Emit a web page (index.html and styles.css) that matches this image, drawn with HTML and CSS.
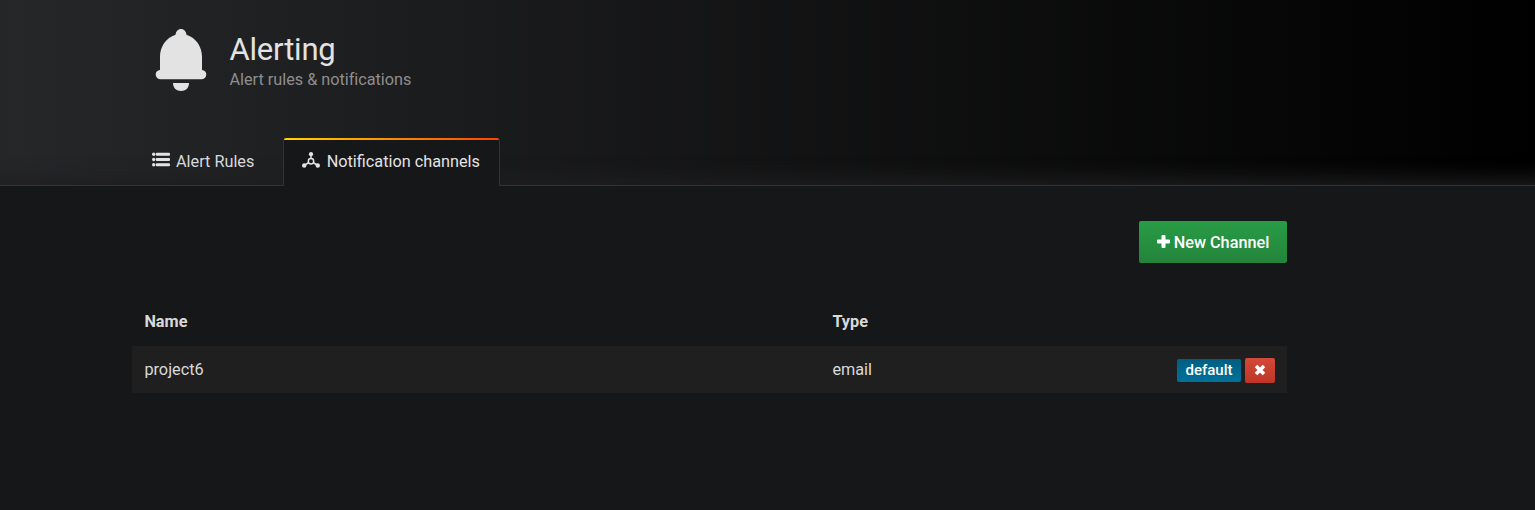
FILE: index.html
```
<!DOCTYPE html>
<html lang="en">
<head>
<meta charset="utf-8">
<title>Alerting</title>
<link rel="stylesheet" href="styles.css">
</head>
<body>
<header class="page-header">
  <div class="container header-inner">
    <div class="page-title">
      <svg class="bell" viewBox="0 0 52 64" width="52" height="64" fill="#e3e3e3">
        <path d="M20.500 6.800C21 3.200 23 1 26 1s5 2.200 5.500 5.800C41 10 47 18.500 47 29v13c2.800.2 4.300 2.100 4.300 4.500 0 2.700-1.800 4.700-4.300 4.700H5C2.500 51.200.7 49.200.7 46.500.7 44.100 2.200 42.200 5 42V29C5 18.500 11 10 20.500 6.800z"/>
        <path d="M18 55h16c0 5-3.400 8-8 8s-8-3-8-8z"/>
      </svg>
      <div class="title-text">
        <h1>Alerting</h1>
        <div class="subtitle">Alert rules &amp; notifications</div>
      </div>
    </div>
    <nav class="tabs">
      <a class="tab">
        <svg class="tab-icon" width="18" height="15" viewBox="0 0 18 15" fill="#e3e3e3">
          <circle cx="1.700" cy="2.200" r="1.700"/><circle cx="1.700" cy="7.500" r="1.700"/><circle cx="1.700" cy="12.800" r="1.700"/>
          <rect x="3.800" y=".7" width="14.200" height="3" rx="1"/><rect x="3.800" y="6" width="14.200" height="3" rx="1"/><rect x="3.800" y="11.300" width="14.200" height="3" rx="1"/>
        </svg>
        <span>Alert Rules</span>
      </a>
      <a class="tab active">
        <svg class="tab-icon" width="18" height="16" viewBox="0 0 18 16" fill="#e3e3e3">
          <path d="M9 2v5M7 10.500l-5 3M11 10.500l5 3" stroke="#e3e3e3" stroke-width="1.500"/>
          <circle cx="9" cy="9.200" r="2.700" fill="none" stroke="#e3e3e3" stroke-width="1.500"/>
          <circle cx="9" cy="2.200" r="2.100"/><circle cx="2.200" cy="13.500" r="2.200"/><circle cx="15.800" cy="13.500" r="2.200"/>
        </svg>
        <span>Notification channels</span>
      </a>
    </nav>
  </div>
</header>
<main class="container page-body">
  <div class="action-bar">
    <button class="btn-new">
      <svg width="13" height="13" viewBox="0 0 13 13" fill="#fff"><path d="M5.500 0h2q1 0 1 1v3.500H12q1 0 1 1v2q0 1-1 1H8.500V12q0 1-1 1h-2q-1 0-1-1V8.500H1q-1 0-1-1v-2q0-1 1-1h3.500V1q0-1 1-1z"/></svg>
      <span>New Channel</span>
    </button>
  </div>
  <table class="channels">
    <thead><tr><th class="col-name">Name</th><th>Type</th><th></th></tr></thead>
    <tbody><tr>
      <td>project6</td><td>email</td>
      <td><div class="row-actions">
        <span class="badge">default</span>
        <button class="btn-delete" aria-label="Delete"><svg width="12" height="12" viewBox="0 0 12 12"><path d="M2 2l8 8M10 2L2 10" stroke="#fff" stroke-width="3.600" stroke-linecap="butt"/></svg></button>
      </div></td>
    </tr></tbody>
  </table>
</main>
</body>
</html>
```
FILE: styles.css
```
* { box-sizing: border-box; }
body {
  margin: 0;
  min-height: 510px;
  background: #161719;
  color: #d8d9da;
  font-family: Roboto, "Liberation Sans", sans-serif;
  font-size: 16.25px;
  line-height: 24px;
}
.container { width: 1155px; margin-left: 132px; }
.page-header {
  height: 186px;
  background: linear-gradient(90deg, #262729, #000);
  box-shadow: inset 0 -22px 20px -16px #1f1f20;
  border-bottom: 1px solid #333;
}
.header-inner {
  height: 186px;
  display: flex;
  flex-direction: column;
  justify-content: space-between;
}
.page-title { display: flex; padding: 28px 0 0 23px; }
.title-text { margin-left: 22.5px; padding-top: 4px; }
h1 {
  margin: 0;
  font-size: 31px;
  font-weight: 400;
  line-height: 36px;
  letter-spacing: -0.2px;
  color: #e3e3e3;
}
.subtitle { color: #8e8e8e; line-height: 24px; letter-spacing: -0.02px; }
.tabs { display: flex; }
.tab {
  display: flex;
  width: 151px;
  height: 48px;
  padding: 12px 0 0 20px;
  white-space: nowrap;
}
.tab-icon { flex: none; margin: 2px 6px 0 0; }
.tab.active {
  width: 217px;
  padding-left: 18px;
  color: #e3e3e3;
  background: #161719;
  border: solid #333;
  border-width: 0 1px;
  border-radius: 3px 3px 0 0;
  position: relative;
}
.tab.active .tab-icon { margin-right: 6.700px; }
.tab.active::before {
  content: "";
  position: absolute;
  top: 0;
  left: 0;
  right: 0;
  height: 2px;
  border-radius: 2px 2px 0 0;
  background: linear-gradient(to right, #ffd500, #ff4400);
}
.page-body { padding-top: 35px; }
.action-bar { display: flex; justify-content: flex-end; margin-bottom: 35px; }
button { border: 0; color: #fff; font: inherit; }
.btn-new {
  display: flex;
  align-items: center;
  justify-content: center;
  gap: 4px;
  width: 148px;
  height: 42px;
  padding: 0;
  border-radius: 2px;
  background: linear-gradient(#299c46, #23843b);
  font-weight: 500;
}
.btn-new span { padding-top: 1px; }
.btn-new svg { margin-bottom: 1px; }
.channels { width: 100%; border-collapse: collapse; table-layout: fixed; }
th, td { padding: 0 12px 0 12.400px; text-align: left; }
th { height: 48px; font-weight: 700; }
td { height: 47px; background: #1f1f1f; }
.col-name { width: 688px; }
.row-actions { display: flex; align-items: center; justify-content: flex-end; gap: 4px; padding-top: 1px; }
.badge {
  width: 64px;
  height: 23px;
  border-radius: 2px;
  background: linear-gradient(#005f81, #00719b);
  color: #fff;
  font-size: 15px;
  font-weight: 500;
  line-height: 22px;
  text-align: center;
}
.btn-delete {
  display: flex;
  align-items: center;
  justify-content: center;
  width: 30px;
  height: 25px;
  padding: 0;
  border-radius: 2px;
  background: linear-gradient(#d44939, #bd3626);
}
```
